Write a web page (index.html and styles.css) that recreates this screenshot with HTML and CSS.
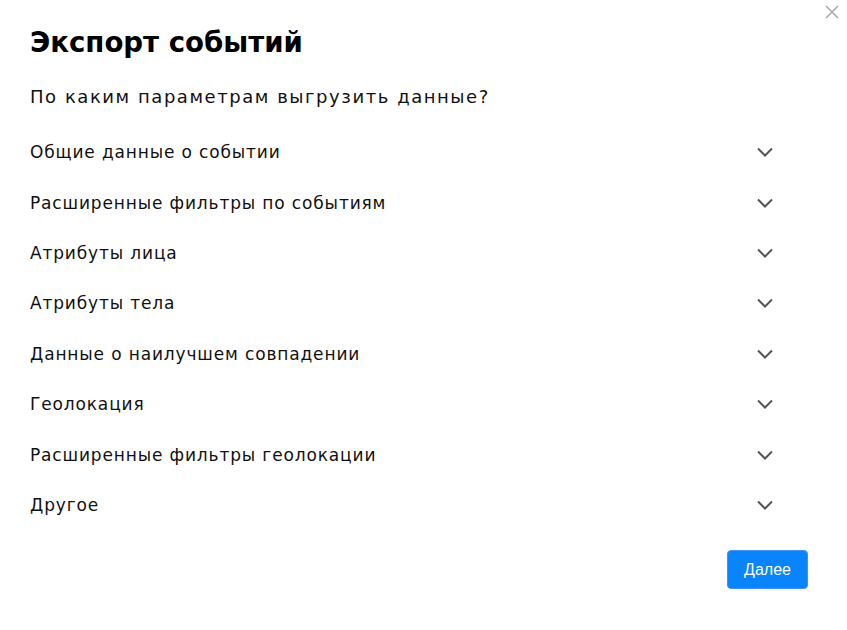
FILE: index.html
```html
<!DOCTYPE html>
<html lang="ru">
<head>
<meta charset="utf-8">
<title>Экспорт событий</title>
<link rel="stylesheet" href="styles.css">
</head>
<body>
<div class="modal">
  <button class="close" aria-label="Закрыть">
    <svg width="14" height="14" viewBox="0 0 14 14"><path d="M1 1L13 13M13 1L1 13" stroke="#a8a8a8" stroke-width="1.5" fill="none"/></svg>
  </button>
  <h1 class="title">Экспорт событий</h1>
  <p class="subtitle">По каким параметрам выгрузить данные?</p>
  <ul class="list">
    <li class="row"><span>Общие данные о событии</span><svg class="chev" width="16" height="10" viewBox="0 0 16 10"><path d="M1 1.5L8 8.5L15 1.5" stroke="#555" stroke-width="2" fill="none"/></svg></li>
    <li class="row"><span>Расширенные фильтры по событиям</span><svg class="chev" width="16" height="10" viewBox="0 0 16 10"><path d="M1 1.5L8 8.5L15 1.5" stroke="#555" stroke-width="2" fill="none"/></svg></li>
    <li class="row"><span>Атрибуты лица</span><svg class="chev" width="16" height="10" viewBox="0 0 16 10"><path d="M1 1.5L8 8.5L15 1.5" stroke="#555" stroke-width="2" fill="none"/></svg></li>
    <li class="row"><span>Атрибуты тела</span><svg class="chev" width="16" height="10" viewBox="0 0 16 10"><path d="M1 1.5L8 8.5L15 1.5" stroke="#555" stroke-width="2" fill="none"/></svg></li>
    <li class="row"><span>Данные о наилучшем совпадении</span><svg class="chev" width="16" height="10" viewBox="0 0 16 10"><path d="M1 1.5L8 8.5L15 1.5" stroke="#555" stroke-width="2" fill="none"/></svg></li>
    <li class="row"><span>Геолокация</span><svg class="chev" width="16" height="10" viewBox="0 0 16 10"><path d="M1 1.5L8 8.5L15 1.5" stroke="#555" stroke-width="2" fill="none"/></svg></li>
    <li class="row"><span>Расширенные фильтры геолокации</span><svg class="chev" width="16" height="10" viewBox="0 0 16 10"><path d="M1 1.5L8 8.5L15 1.5" stroke="#555" stroke-width="2" fill="none"/></svg></li>
    <li class="row"><span>Другое</span><svg class="chev" width="16" height="10" viewBox="0 0 16 10"><path d="M1 1.5L8 8.5L15 1.5" stroke="#555" stroke-width="2" fill="none"/></svg></li>
  </ul>
  <div class="footer">
    <button class="next">Далее</button>
  </div>
</div>
</body>
</html>
```
FILE: styles.css
```css
html, body {
  margin: 0;
  padding: 0;
  background: #ffffff;
}
.modal {
  position: relative;
  width: 847px;
  height: 630px;
  box-sizing: border-box;
  padding: 26px 39px 0 30px;
  font-family: "DejaVu Sans", "Noto Sans", sans-serif;
  color: #111;
}
.close {
  position: absolute;
  top: 5px;
  right: 8px;
  width: 14px;
  height: 14px;
  padding: 0;
  border: 0;
  background: none;
  display: flex;
}
.title {
  margin: 0;
  font-size: 27.6px;
  line-height: 34px;
  font-weight: 700;
  letter-spacing: 0;
  color: #000;
}
.subtitle {
  margin: 25px 0 0;
  font-size: 18px;
  line-height: 24px;
  letter-spacing: 1.55px;
  color: #111;
}
.list {
  list-style: none;
  margin: 18px 0 0;
  padding: 0 35px 0 0;
}
.row {
  height: 50.4px;
  display: flex;
  align-items: center;
  justify-content: space-between;
  font-size: 17px;
  letter-spacing: 0.85px;
  color: #111;
}
.footer {
  display: flex;
  justify-content: flex-end;
  margin-top: 20px;
}
.next {
  width: 81px;
  height: 39px;
  border: 1px solid #3d96f5;
  border-radius: 4px;
  background: #0a84fb;
  color: #fff;
  font-family: "Liberation Sans", Arial, sans-serif;
  font-size: 16px;
}
```
